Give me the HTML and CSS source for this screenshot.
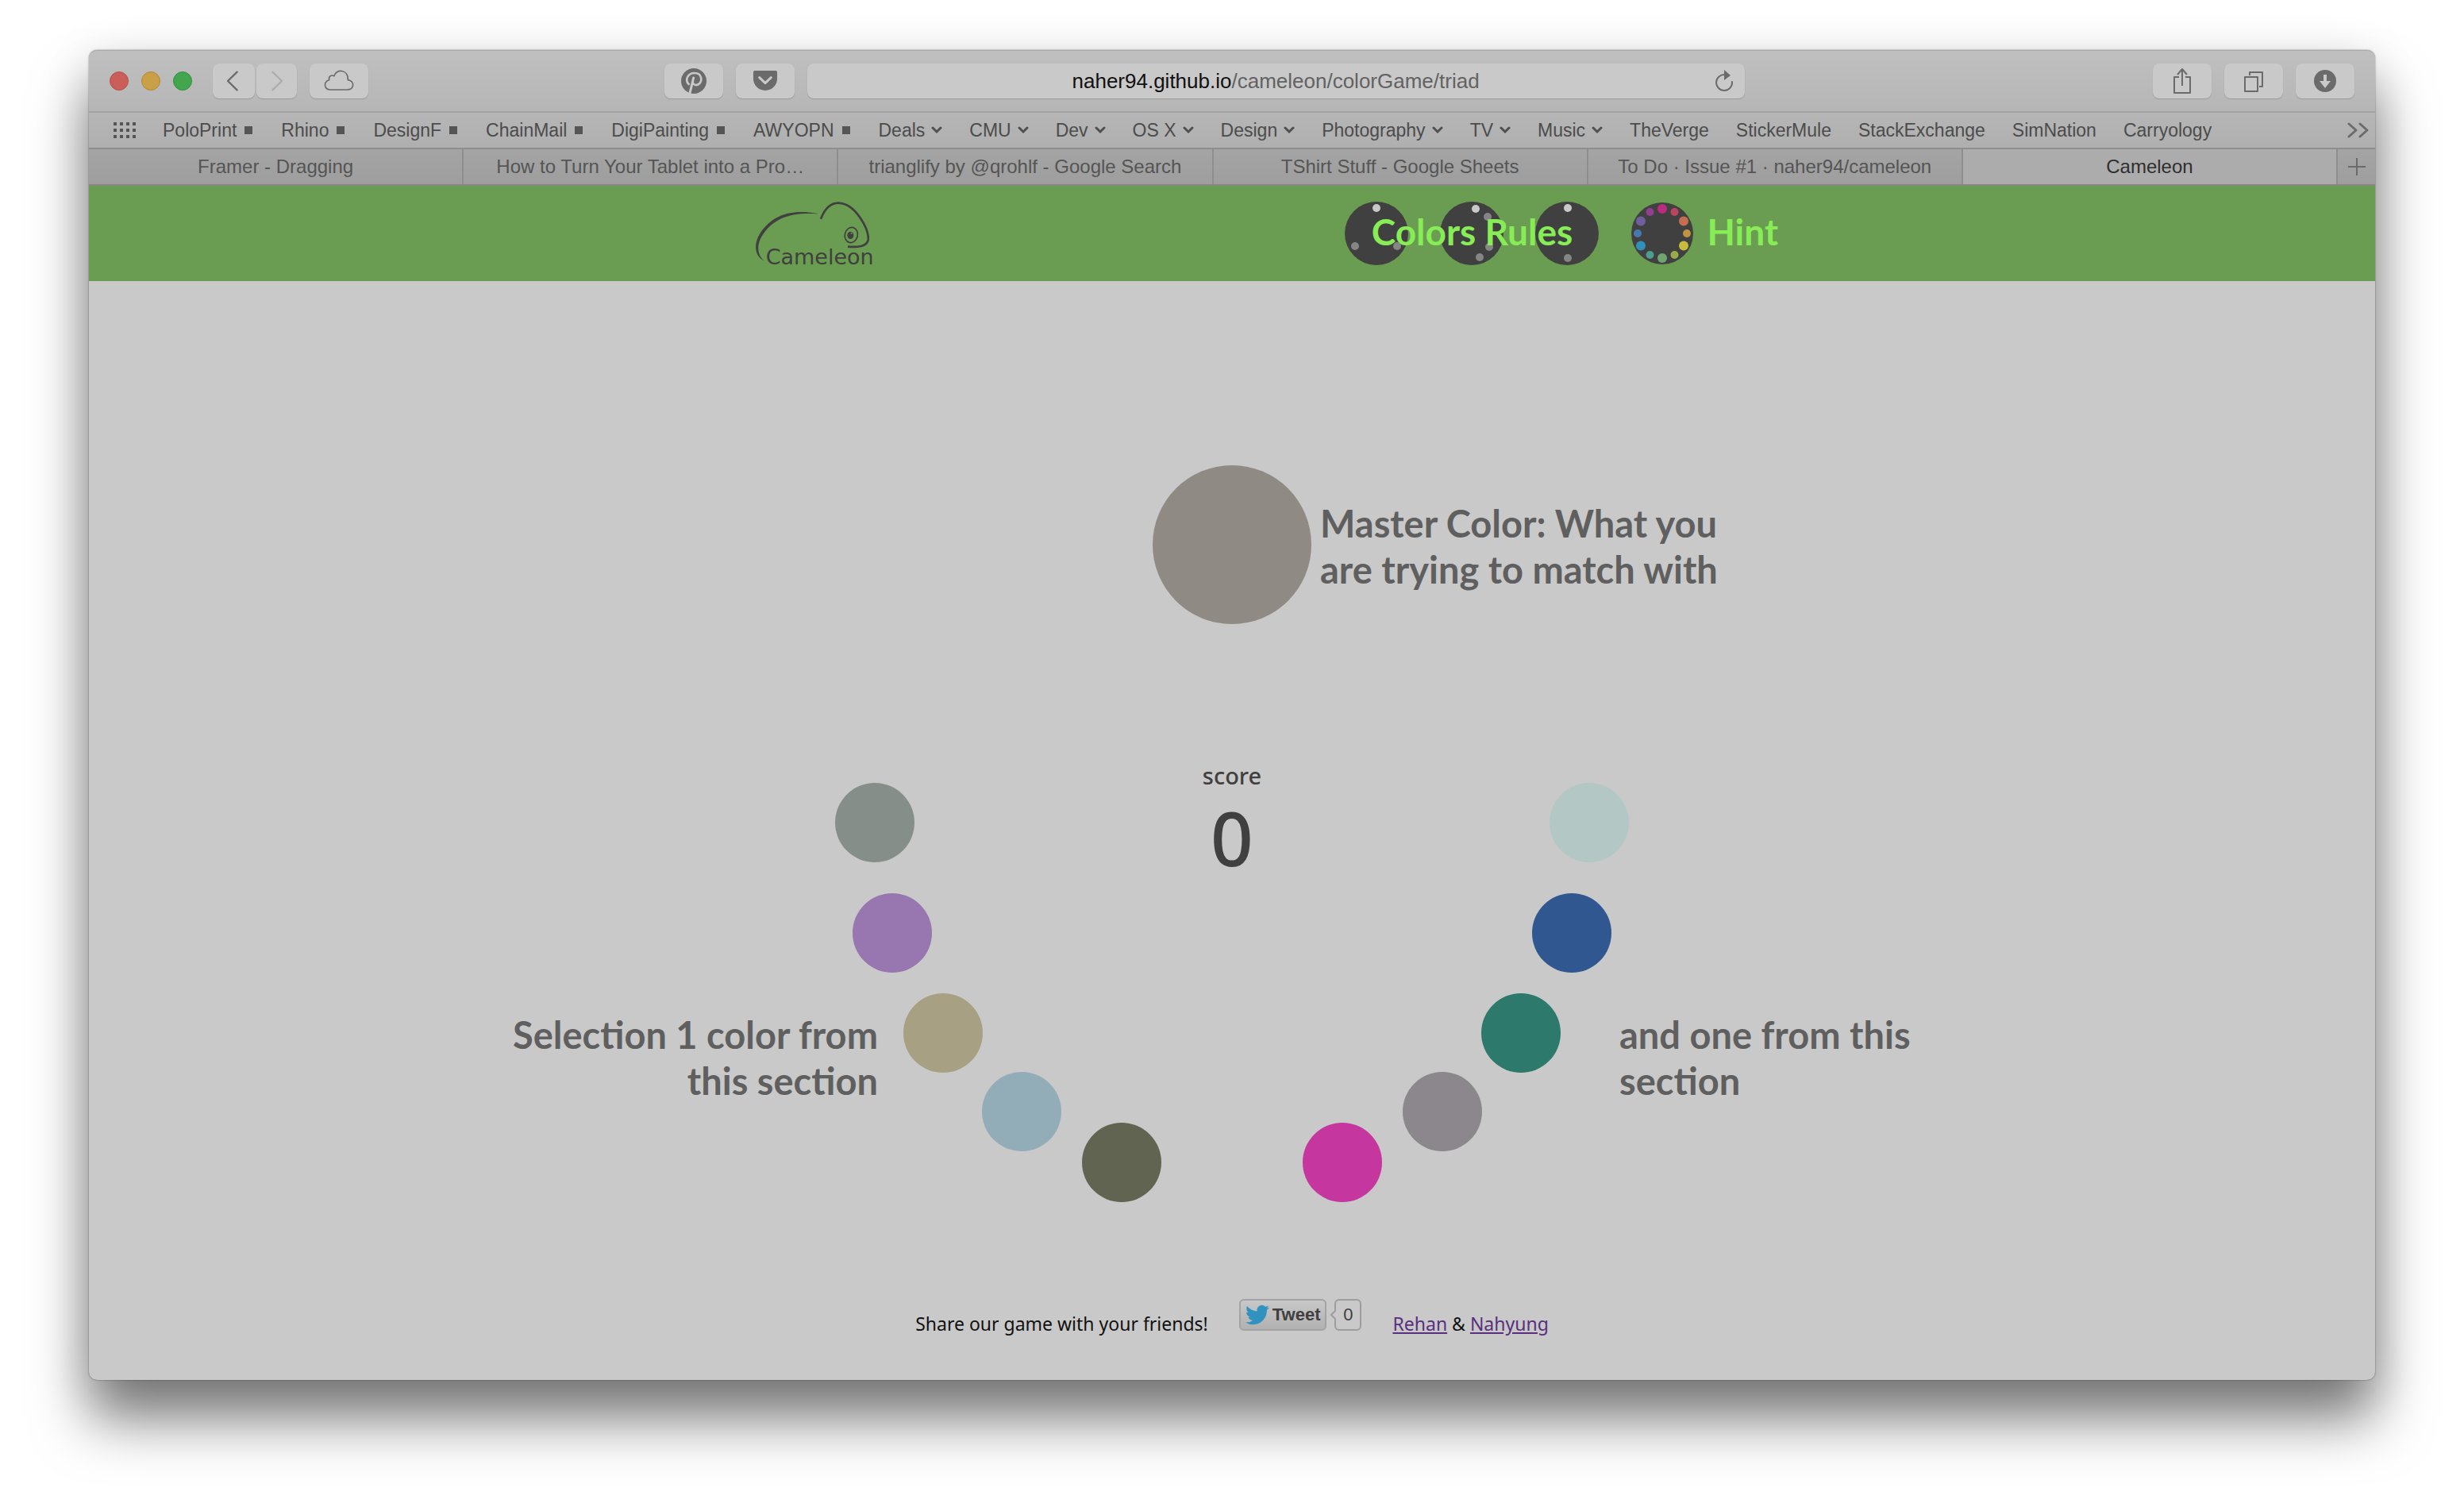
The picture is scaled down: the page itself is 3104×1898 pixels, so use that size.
FILE: index.html
```html
<!DOCTYPE html>
<html lang="en">
<head>
<meta charset="utf-8">
<title>Cameleon</title>
<link rel="stylesheet" href="styles.css">
</head>
<body>
<div class="window">
  <div class="toolbar">
    <div class="group">
      <div class="lights">
        <button class="light close" aria-label="Close"></button>
        <button class="light minimize" aria-label="Minimize"></button>
        <button class="light expand" aria-label="Full screen"></button>
      </div>
      <div class="history">
        <button class="tool" aria-label="Back"><svg width="53" height="44" viewBox="24 30 159 132"><path class="line" stroke-width="7" d="M116 62 81 96l35 34"/></svg></button>
        <button class="tool faded" aria-label="Forward"><svg width="51" height="44" viewBox="189 30 153 132"><path class="line" stroke-width="7" d="M250 62l35 34-35 34"/></svg></button>
      </div>
      <button class="tool" aria-label="iCloud tabs"><svg width="74" height="44" viewBox="390 30 222 132"><path class="line" stroke-width="5" d="M470 129H532C560 129 561 96 535 92 537 50 488 50 483 77 471 71 461 80 464 92 440 100 445 129 470 129Z"/></svg></button>
    </div>
    <div class="middle">
      <button class="tool" aria-label="Pinterest"><svg width="74" height="44" viewBox="18 30 222 132"><circle class="solid" cx="129" cy="96" r="48"/><path class="cut" stroke-width="8" d="M110 108C94 92 106 66 132 66 160 66 162 96 149 107 140 114 129 112 126 104"/><path class="cut" stroke-width="9" stroke-linecap="butt" d="M128 84 114 142"/></svg></button>
      <button class="tool" aria-label="Pocket"><svg width="74" height="44" viewBox="288 30 222 132"><path class="solid" d="M359 57H439Q444 57 444 62V88C444 112 424 132 399 132S354 112 354 88V62Q354 57 359 57Z"/><path class="cut" stroke-width="9" d="M377 83 399 104 421 83"/></svg></button>
      <div class="address">
        <button class="url">naher94.github.io<span class="path">/cameleon/colorGame/triad</span></button>
        <button class="reload" aria-label="Reload"><svg width="24" height="28" viewBox="0 0 24 28"><path class="line" stroke-width="2" d="M13 6A10 10 0 1 0 22 15"/><path class="solid" d="M12 0l8 7-8 6z"/></svg></button>
      </div>
    </div>
    <div class="group end">
      <button class="tool" aria-label="Share"><svg width="74" height="44" viewBox="0 0 74 44"><path class="thin" d="M33 17H27V37H47V17H41M37 28V8M31 14l6-7 6 7"/></svg></button>
      <button class="tool" aria-label="Show all tabs"><svg width="74" height="44" viewBox="0 0 74 44"><path class="thin" d="M26 17H42V35H26ZM32 15V11H48V29H44"/></svg></button>
      <button class="tool" aria-label="Downloads"><svg width="74" height="44" viewBox="0 0 74 44"><circle class="solid" cx="37" cy="22" r="14"/><path fill="#c9c9c9" d="M35 14h4v8h5l-7 9-7-9h5z"/></svg></button>
    </div>
  </div>

  <nav class="bookmarks" aria-label="Bookmarks">
    <svg class="dots" width="28" height="20" viewBox="0 0 28 20"><path stroke="#555" stroke-width="4" stroke-dasharray="4 4" d="M0 2H28M0 10H28M0 18H28"/></svg>
    <a class="square" href="#">PoloPrint</a>
    <a class="square" href="#">Rhino</a>
    <a class="square" href="#">DesignF</a>
    <a class="square" href="#">ChainMail</a>
    <a class="square" href="#">DigiPainting</a>
    <a class="square" href="#">AWYOPN</a>
    <a href="#">Deals<svg class="chev" viewBox="0 0 14 10"><path d="M2 2l5 5 5-5"/></svg></a>
    <a href="#">CMU<svg class="chev" viewBox="0 0 14 10"><path d="M2 2l5 5 5-5"/></svg></a>
    <a href="#">Dev<svg class="chev" viewBox="0 0 14 10"><path d="M2 2l5 5 5-5"/></svg></a>
    <a href="#">OS X<svg class="chev" viewBox="0 0 14 10"><path d="M2 2l5 5 5-5"/></svg></a>
    <a href="#">Design<svg class="chev" viewBox="0 0 14 10"><path d="M2 2l5 5 5-5"/></svg></a>
    <a href="#">Photography<svg class="chev" viewBox="0 0 14 10"><path d="M2 2l5 5 5-5"/></svg></a>
    <a href="#">TV<svg class="chev" viewBox="0 0 14 10"><path d="M2 2l5 5 5-5"/></svg></a>
    <a href="#">Music<svg class="chev" viewBox="0 0 14 10"><path d="M2 2l5 5 5-5"/></svg></a>
    <a href="#">TheVerge</a>
    <a href="#">StickerMule</a>
    <a href="#">StackExchange</a>
    <a href="#">SimNation</a>
    <a href="#">Carryology</a>
    <button class="more" aria-label="More bookmarks"><svg width="28" height="20" viewBox="0 0 28 20"><path class="line" stroke-width="3" d="M2 2l9 8-9 8M16 2l9 8-9 8"/></svg></button>
  </nav>

  <div class="tabs">
    <button class="tab">Framer - Dragging</button>
    <button class="tab">How to Turn Your Tablet into a Pro…</button>
    <button class="tab">trianglify by @qrohlf - Google Search</button>
    <button class="tab">TShirt Stuff - Google Sheets</button>
    <button class="tab">To Do · Issue #1 · naher94/cameleon</button>
    <button class="tab current">Cameleon</button>
    <button class="add" aria-label="New tab"><svg width="22" height="22" viewBox="0 0 22 22"><path stroke="#6a6a6a" stroke-width="2" d="M11 0V22M0 11H22"/></svg></button>
  </div>

  <header class="header">
    <div class="header-inner">
      <a href="#" aria-label="Cameleon home"><svg class="logo" width="150" height="80" viewBox="66 72 450 240">
        <path fill="#404040" d="M99 297C55 275 58 222 92 178 146 109 225 102 305 118 230 114 158 118 105 180 68 224 66 268 99 297Z"/>
        <path fill="none" stroke="#404040" stroke-width="8" d="M312 137C328 96 350 77 378 77 418 77 450 112 474 154 488 180 493 198 491 216 487 243 450 244 414 242"/>
        <ellipse cx="427" cy="198" rx="24" ry="29" transform="rotate(15 427 198)" fill="none" stroke="#404040" stroke-width="5"/>
        <ellipse cx="424" cy="199" rx="12" ry="14" fill="#404040"/><circle cx="428" cy="191" r="3" fill="#6a9c51"/>
        <text x="104" y="310">Cameleon</text>
      </svg></a>
      <div class="menu">
        <button class="menu-item rules">
          <svg width="320" height="80" viewBox="0 0 320 80">
            <g fill="#404040"><circle cx="40" cy="40" r="40"/><circle cx="160" cy="40" r="40"/><circle cx="280" cy="40" r="40"/></g>
            <g fill="#c9c9c9"><circle cx="40" cy="8" r="5"/><circle cx="165" cy="9" r="5"/><circle cx="281" cy="8" r="5"/></g>
            <g fill="#858585"><circle cx="13" cy="56" r="5"/><circle cx="66" cy="56" r="5"/><circle cx="180" cy="19" r="5"/><circle cx="182" cy="57" r="5"/><circle cx="170" cy="70" r="5"/><circle cx="281" cy="71" r="5"/></g>
          </svg>
          <span>Colors Rules</span>
        </button>
        <button class="menu-item hint">
          <svg width="80" height="80" viewBox="-40 -40 80 80">
            <circle r="39" fill="#404040"/>
            <circle cx="0" cy="-31" r="6" fill="#b92c7f"/><circle cx="15.5" cy="-27" r="5" fill="#b94560"/>
            <circle cx="27" cy="-15.5" r="6" fill="#c46e4f"/><circle cx="31" cy="0" r="5" fill="#c0943f"/>
            <circle cx="27" cy="15.5" r="6" fill="#c7bc3d"/><circle cx="15.5" cy="27" r="5" fill="#98ac4c"/>
            <circle cx="0" cy="31" r="6" fill="#71a56f"/><circle cx="-15.5" cy="27" r="5" fill="#4c9c90"/>
            <circle cx="-27" cy="15.5" r="6" fill="#3090ba"/><circle cx="-31" cy="0" r="5" fill="#4877ad"/>
            <circle cx="-27" cy="-15.5" r="6" fill="#705f9e"/><circle cx="-15.5" cy="-27" r="5" fill="#8f4090"/>
          </svg>
          <span>Hint</span>
        </button>
      </div>
    </div>
  </header>

  <main class="game">
    <div class="board">
      <button class="swatch master" aria-label="Master color"></button>
      <div class="score"><span class="score-name">score</span><span class="score-value">0</span></div>
      <button class="swatch" style="--a:180deg;background:#868e8a" aria-label="Left color 1"></button>
      <button class="swatch" style="--a:162deg;background:#9876b0" aria-label="Left color 2"></button>
      <button class="swatch" style="--a:144deg;background:#a8a082" aria-label="Left color 3"></button>
      <button class="swatch" style="--a:126deg;background:#93adb8" aria-label="Left color 4"></button>
      <button class="swatch" style="--a:108deg;background:#616450" aria-label="Left color 5"></button>
      <button class="swatch" style="--a:0deg;background:#b3c8c4" aria-label="Right color 1"></button>
      <button class="swatch" style="--a:18deg;background:#30578f" aria-label="Right color 2"></button>
      <button class="swatch" style="--a:36deg;background:#2d796b" aria-label="Right color 3"></button>
      <button class="swatch" style="--a:54deg;background:#8c868d" aria-label="Right color 4"></button>
      <button class="swatch" style="--a:72deg;background:#c6369f" aria-label="Right color 5"></button>
      <p class="tip tip-master">Master Color: What you<br>are trying to match with</p>
      <p class="tip tip-left">Selection 1 color from<br>this section</p>
      <p class="tip tip-right">and one from this<br>section</p>
    </div>
    <footer class="footer">
      <span>Share our game with your friends!</span>
      <div class="share">
        <button class="tweet"><svg width="30" height="26" viewBox="0 0 24 20"><path fill="#3292bf" d="M23.950 2.570a10 10 0 0 1-2.820.770 4.960 4.960 0 0 0 2.160-2.720c-.950.550-2.010.960-3.130 1.180a4.920 4.920 0 0 0-8.380 4.480C7.690 6.090 4.070 4.130 1.640 1.160a4.820 4.820 0 0 0-.660 2.480c0 1.710.870 3.210 2.190 4.100a4.900 4.900 0 0 1-2.230-.620v.060a4.920 4.920 0 0 0 3.950 4.830 5 5 0 0 1-2.210.080 4.940 4.940 0 0 0 4.600 3.420A9.870 9.870 0 0 1 0 17.540a14 14 0 0 0 7.550 2.210c9.050 0 14-7.500 14-13.980 0-.210 0-.420-.020-.630a9.940 9.940 0 0 0 2.460-2.550z"/></svg>Tweet</button>
        <a class="count" href="#">0<svg class="nib" width="8" height="14" viewBox="0 0 8 14"><path fill="#c9c9c9" stroke="#9d9d9d" stroke-width="2" d="M8 1 2 7l6 6"/></svg></a>
      </div>
      <span><a href="#">Rehan</a> &amp; <a href="#">Nahyung</a></span>
    </footer>
  </main>
</div>
</body>
</html>
```
FILE: styles.css
```css
* { box-sizing: border-box; }

body {
  margin: 0;
  min-height: 100vh;
  padding: 63px 112px 160px;
  background: #fff;
  font-family: "Noto Sans", sans-serif;
}

button {
  margin: 0;
  padding: 0;
  border: 0;
  background: none;
  font: inherit;
  color: inherit;
}

svg { display: block; flex: none; }

.window {
  border-radius: 10px;
  background: #c9c9c9;
  box-shadow: 0 0 2px rgba(0, 0, 0, .5), 0 50px 70px rgba(0, 0, 0, .5), 0 10px 60px rgba(0, 0, 0, .12);
}

/* Browser toolbar */
.toolbar {
  display: grid;
  grid-template-columns: 10fr minmax(0, 1361px) 11fr;
  align-items: center;
  padding: 0 26px;
  height: 79px;
  border-bottom: 2px solid #a4a4a4;
  border-top: 1px solid #a9a9a9;
  border-radius: 10px 10px 0 0;
  background: linear-gradient(#bfbfbf, #b6b6b6);
}
.group, .lights, .history, .middle { display: flex; align-items: center; }
.group, .middle { gap: 16px; }
.group.end { justify-content: flex-end; }
.lights { gap: 16px; margin-right: 10px; }
.history { gap: 2px; }
.light { width: 24px; height: 24px; border-radius: 50%; }
.close { background: #ca5f5a; border: 1px solid #b84f4b; }
.minimize { background: #c99f48; border: 1px solid #b38836; }
.expand { background: #43a64e; border: 1px solid #2f9240; }
.tool, .address {
  height: 44px;
  border-radius: 8px;
  background: #c9c9c9;
  box-shadow: 0 1px 1px #999;
}
.line { fill: none; stroke: #6b6b6b; stroke-linecap: round; stroke-linejoin: round; }
.faded .line { stroke: #adadad; }
.thin { fill: none; stroke: #6b6b6b; stroke-width: 2; stroke-linejoin: round; }
.solid { fill: #6b6b6b; }
.cut { fill: none; stroke: #c9c9c9; stroke-linecap: round; stroke-linejoin: round; }
.address {
  flex: 1;
  display: grid;
  grid-template-columns: 38px 1fr 38px;
  align-items: center;
}
.url {
  grid-column: 2;
  font: 26px/32px "Liberation Sans", sans-serif;
  color: #111;
}
.path { color: #626262; }

/* Bookmarks bar */
.bookmarks {
  display: flex;
  align-items: center;
  gap: 34px;
  height: 46px;
  padding: 0 7px 0 31px;
  border-bottom: 2px solid #8e8e8e;
  background: linear-gradient(#b6b6b6, #afafaf);
  font: 23px/28px "Liberation Sans", sans-serif;
}
.bookmarks a {
  display: flex;
  align-items: center;
  gap: 8px;
  color: #4c4c4c;
  text-decoration: none;
  white-space: nowrap;
}
.bookmarks .square { gap: 10px; margin-right: 2px; }
.square::after { content: ""; width: 10px; height: 10px; background: #555; }
.chev { width: 14px; height: 10px; fill: none; stroke: #505050; stroke-width: 3; stroke-linecap: round; }
.more { margin-left: auto; }

/* Tabs */
.tabs {
  display: flex;
  height: 46px;
  border-bottom: 2px solid #868686;
  background: linear-gradient(#a4a4a4, #9e9e9e);
  font: 24px/28px "Liberation Sans", sans-serif;
  color: #555;
}
.tab { flex: 1 1 0; border-right: 2px solid #8e8e8e; white-space: nowrap; }
.tab.current { background: #acacac; color: #2f2f2f; }
.add { display: grid; place-items: center; width: 47px; }

/* Site header */
.header { background: #6a9c51; padding: 20px 0; }
.header-inner {
  display: flex;
  justify-content: space-between;
  align-items: center;
  width: 1288px;
  margin-left: calc(50% - 600px);
}
.logo { overflow: visible; }
.logo text { font-family: "DejaVu Sans", sans-serif; font-size: 81px; fill: #404040; }
.menu, .hint { display: flex; align-items: center; }
.menu { gap: 40px; }
.menu-item { font: 700 46px/56px Lato, sans-serif; color: #87ec56; }
.menu-item span { padding-bottom: 4px; }
.rules { display: grid; place-items: center; }
.rules > * { grid-area: 1 / 1; }
.hint { gap: 16px; }

/* Game board: swatches sit on a circle round the score */
.board {
  --cy: 682px;
  --r: 450px;
  position: relative;
  height: 1282px;
}
.swatch {
  position: absolute;
  width: 100px;
  height: 100px;
  border-radius: 50%;
  left: calc(50% - 50px + var(--r) * cos(var(--a)));
  top: calc(var(--cy) - 50px + var(--r) * sin(var(--a)));
}
.swatch.master {
  --a: -90deg;
  --r: 350px;
  width: 200px;
  height: 200px;
  margin: -50px;
  background: #8f8b84;
}
.score {
  position: absolute;
  left: calc(50% - 100px);
  top: calc(var(--cy) - 79px);
  width: 200px;
  display: flex;
  flex-direction: column;
  text-align: center;
  color: #404040;
  font-weight: 500;
}
.score-name { font-size: 29px; line-height: 40px; }
.score-value { font-size: 94px; line-height: 116px; }
.tip {
  position: absolute;
  margin: 0;
  font: 700 47px/58px Lato, sans-serif;
  color: #5f5f5f;
  white-space: nowrap;
}
.tip-master { left: calc(50% + 111px); top: 276px; }
.tip-left { right: calc(50% + 446px); top: 920px; text-align: right; }
.tip-right { left: calc(50% + 488px); top: 920px; }

/* Footer */
.footer {
  display: flex;
  justify-content: center;
  align-items: flex-end;
  gap: 39px;
  padding-bottom: 56px;
  font-size: 23px;
  line-height: 30px;
  color: #111;
}
.footer span a { color: #59307f; }
.share {
  display: flex;
  gap: 10px;
  padding-bottom: 6px;
  font: 22px/26px "Liberation Sans", sans-serif;
}
.tweet {
  display: flex;
  align-items: center;
  gap: 4px;
  height: 40px;
  padding: 0 6px;
  border: 2px solid #a3a3a3;
  border-radius: 6px;
  background: linear-gradient(#c8c8c8, #b1b1b1);
  font-weight: 700;
  color: #404040;
}
.count {
  position: relative;
  display: grid;
  place-items: center;
  width: 34px;
  height: 40px;
  border: 2px solid #9d9d9d;
  border-radius: 6px;
  color: #404040;
  text-decoration: none;
}
.nib { position: absolute; left: -8px; top: 11px; }
```
